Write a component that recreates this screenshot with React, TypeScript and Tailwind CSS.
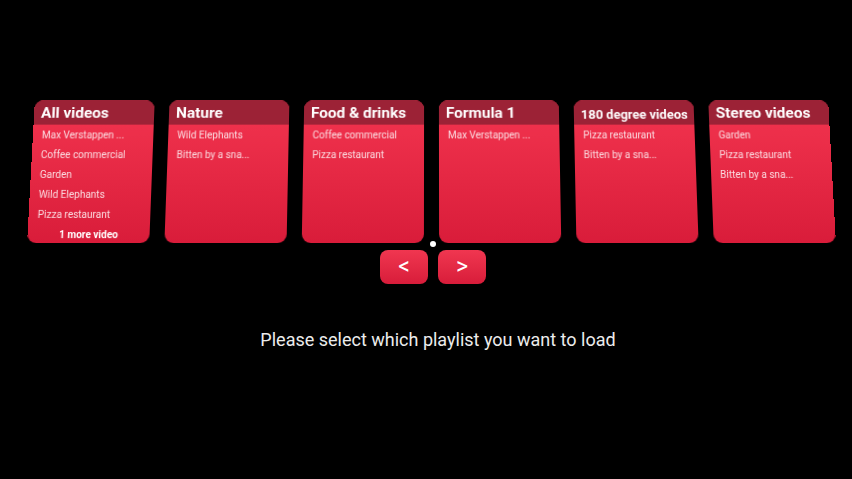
import React from 'react'

type Playlist = {
  title: string
  items: string[]
  more?: string
  small?: boolean
}

const playlists: Playlist[] = [
  {
    title: 'All videos',
    items: ['Max Verstappen ...', 'Coffee commercial', 'Garden', 'Wild Elephants', 'Pizza restaurant'],
    more: '1 more video',
  },
  { title: 'Nature', items: ['Wild Elephants', 'Bitten by a sna...'] },
  { title: 'Food & drinks', items: ['Coffee commercial', 'Pizza restaurant'] },
  { title: 'Formula 1', items: ['Max Verstappen ...'] },
  { title: '180 degree videos', items: ['Pizza restaurant', 'Bitten by a sna...'], small: true },
  { title: 'Stereo videos', items: ['Garden', 'Pizza restaurant', 'Bitten by a sna...'] },
]

function PlaylistCard({ playlist }: { playlist: Playlist }) {
  return (
    <div className="flex flex-col w-[121px] h-[144px] rounded-[9px] overflow-hidden bg-gradient-to-b from-[#f3344f] to-[#d91c3a]">
      <div className="shrink-0 h-[25px] bg-[#9c2236] flex items-center pl-[7px] pt-[3px]">
        <span
          className={
            playlist.small
              ? 'text-white font-bold text-[13px] leading-none whitespace-nowrap'
              : 'text-white font-bold text-[15.5px] leading-none whitespace-nowrap'
          }
        >
          {playlist.title}
        </span>
      </div>
      {playlist.items.map((item, index) => (
        <span
          key={index}
          className="shrink-0 h-[20px] flex items-center pl-[9px] text-[10px] text-[#fbdde2] whitespace-nowrap"
        >
          {item}
        </span>
      ))}
      {playlist.more && (
        <span className="shrink-0 h-[20px] flex items-center justify-center text-[10px] font-bold text-white">
          {playlist.more}
        </span>
      )}
    </div>
  )
}

function ArrowButton({ label }: { label: string }) {
  return (
    <button className="w-[48px] h-[34px] rounded-[8px] bg-gradient-to-b from-[#f03650] to-[#d81c3a] text-white text-[23px] leading-none pb-[2px]">
      {label}
    </button>
  )
}

export default function App() {
  return (
    <div className="relative w-screen h-screen bg-black overflow-hidden font-['Roboto',sans-serif]">
      <div className="w-[801px] ml-[31px] mt-[99px] perspective-[900px]">
        <div className="flex gap-[15px] rotate-x-[7deg]">
          {playlists.map((p, i) => (
            <PlaylistCard key={i} playlist={p} />
          ))}
        </div>
      </div>

      <div className="flex justify-center gap-[10px] mt-[7px] ml-[14px]">
        <ArrowButton label="<" />
        <ArrowButton label=">" />
      </div>

      <p className="mt-[44px] pl-[24px] text-center text-[#ececec] text-[18px] leading-[24px]">
        Please select which playlist you want to load
      </p>

      {/* gaze cursor */}
      <div className="absolute left-[430px] top-[241px] w-[6px] h-[6px] rounded-full bg-white" />
    </div>
  )
}
